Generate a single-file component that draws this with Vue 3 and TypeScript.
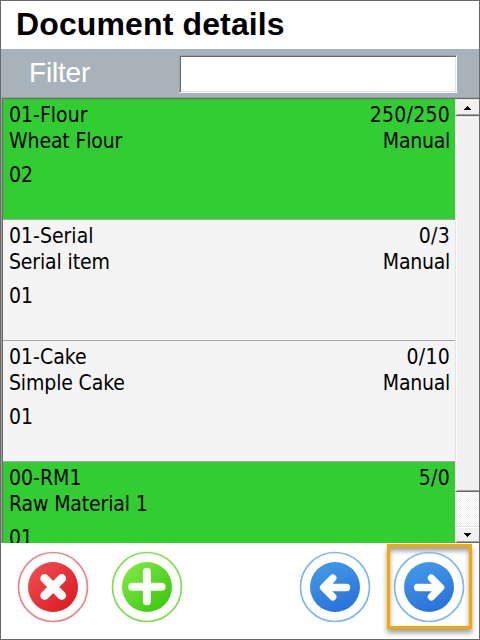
<script setup lang="ts">
import { ref } from 'vue'

interface DocumentLine {
  code: string
  name: string
  warehouse: string
  quantity: string
  mode: string
  done: boolean
}

const filter = ref('')

const lines: DocumentLine[] = [
  { code: '01-Flour', name: 'Wheat Flour', warehouse: '02', quantity: '250/250', mode: 'Manual', done: true },
  { code: '01-Serial', name: 'Serial item', warehouse: '01', quantity: '0/3', mode: 'Manual', done: false },
  { code: '01-Cake', name: 'Simple Cake', warehouse: '01', quantity: '0/10', mode: 'Manual', done: false },
  { code: '00-RM1', name: 'Raw Material 1', warehouse: '01', quantity: '5/0', mode: '', done: true },
]
</script>

<template>
  <main class="window">
    <h1 class="title">Document details</h1>
    <div class="filter-bar">
      <label class="filter-label" for="filter">Filter</label>
      <input id="filter" v-model="filter" class="filter-input" type="text" />
    </div>

    <section class="list">
      <div class="rows">
        <article v-for="line in lines" :key="line.code" class="row" :class="{ done: line.done }">
          <div class="pair"><span class="code">{{ line.code }}</span><span class="quantity">{{ line.quantity }}</span></div>
          <div class="pair"><span>{{ line.name }}</span><span class="mode">{{ line.mode }}</span></div>
          <div class="pair warehouse"><span>{{ line.warehouse }}</span></div>
        </article>
      </div>
      <div class="scrollbar">
        <div class="raised arrow">
          <svg width="7" height="4" viewBox="0 0 7 4" shape-rendering="crispEdges"><path d="M3 0h1v1h1v1h1v1h1v1H0V3h1V2h1V1h1z" /></svg>
        </div>
        <div class="raised thumb"></div>
        <div class="track"></div>
        <div class="raised arrow">
          <svg width="7" height="4" viewBox="0 0 7 4" shape-rendering="crispEdges"><path d="M0 0h7v1H6v1H5v1H4v1H3V3H2V2H1V1H0z" /></svg>
        </div>
      </div>
    </section>

    <footer class="actions">
      <svg class="defs" width="0" height="0">
        <defs>
          <linearGradient id="red" x1="0" y1="0" x2="1" y2="1"><stop offset=".1" stop-color="#f04a4e" /><stop offset=".9" stop-color="#dc1c24" /></linearGradient>
          <linearGradient id="green" x1="0" y1="0" x2="1" y2="1"><stop offset=".1" stop-color="#7de83f" /><stop offset=".9" stop-color="#3cc811" /></linearGradient>
          <linearGradient id="blue" x1=".3" y1="0" x2=".7" y2="1"><stop offset="0" stop-color="#4299e8" /><stop offset="1" stop-color="#2871d9" /></linearGradient>
        </defs>
      </svg>
      <button class="action" aria-label="Cancel">
        <svg width="72" height="72" viewBox="-36 -36 72 72">
          <circle r="34.5" fill="#fff" stroke="#ec8588" stroke-width="1.7" />
          <circle r="25" fill="url(#red)" />
          <path d="M-8.3-8.5 8.7 8.5M8.7-8.5-8.3 8.5" stroke="#fff" stroke-width="8.8" stroke-linecap="round" />
        </svg>
      </button>
      <button class="action add" aria-label="Add">
        <svg width="72" height="72" viewBox="-36 -36 72 72">
          <circle r="34.5" fill="#fff" stroke="#80dd50" stroke-width="1.7" />
          <circle r="25" fill="url(#green)" />
          <path d="M-.1-15.2V14.2M-14.8-.3H14.6" stroke="#fff" stroke-width="8" stroke-linecap="round" />
        </svg>
      </button>
      <button class="action back" aria-label="Back">
        <svg width="72" height="72" viewBox="-36 -36 72 72">
          <circle r="34.5" fill="#fff" stroke="#80b7ec" stroke-width="1.7" />
          <circle r="25" fill="url(#blue)" />
          <path d="M-10.6.5H11.6M-2.2-8.8-11.5.5-2.2 9.8" fill="none" stroke="#fff" stroke-width="7.3" stroke-linecap="round" stroke-linejoin="round" />
        </svg>
      </button>
      <button class="action next" aria-label="Next">
        <svg width="72" height="72" viewBox="-36 -36 72 72">
          <circle r="34.5" fill="none" stroke="#80b7ec" stroke-width="1.7" />
          <circle r="25" fill="url(#blue)" />
          <path d="M10.6.5H-11.4M2.4-8.8 11.7.5 2.4 9.8" fill="none" stroke="#fff" stroke-width="7.3" stroke-linecap="round" stroke-linejoin="round" />
        </svg>
      </button>
    </footer>
  </main>
</template>

<style>
body {
  margin: 0;
  overflow: hidden;
}
</style>

<style scoped>
.window {
  box-sizing: border-box;
  width: 480px;
  height: 640px;
  border: 1px solid #696969;
  background: #fff;
  display: flex;
  flex-direction: column;
  overflow: hidden;
  font-family: "Liberation Sans", Arial, sans-serif;
}
.title {
  margin: 0;
  height: 48px;
  padding-left: 15px;
  box-sizing: border-box;
  font-size: 32px;
  line-height: 47px;
  letter-spacing: 0.13px;
  font-weight: 700;
  color: #000;
  flex: none;
  white-space: nowrap;
}
.filter-bar {
  flex: none;
  height: 48px;
  box-sizing: border-box;
  padding: 6px 22px 4px 28px;
  display: flex;
  justify-content: space-between;
  background: #a8b2ba;
}
.filter-label {
  font-size: 28px;
  line-height: 35px;
  letter-spacing: -0.2px;
  color: #fff;
}
.filter-input {
  box-sizing: border-box;
  width: 278px;
  height: 38px;
  margin: 0;
  padding: 0 6px;
  border: 1px solid;
  border-color: #a0a0a0 #fff #fff #a0a0a0;
  border-radius: 0;
  box-shadow: inset 1px 1px #696969, inset -1px -1px #e3e3e3;
  background: #fff;
  font: 24px "Liberation Sans", Arial, sans-serif;
  outline: none;
}
.list {
  flex: none;
  height: 446px;
  box-sizing: border-box;
  display: flex;
  padding: 2px 0 0 2px;
  box-shadow: inset 1px 1px #a0a0a0, inset 2px 2px #696969;
}
.rows {
  width: 452px;
  height: 444px;
  overflow: hidden;
  font-family: "DejaVu Sans Condensed", "DejaVu Sans", sans-serif;
  font-stretch: condensed;
  font-size: 21px;
  line-height: 26px;
  letter-spacing: -0.13px;
  color: #000;
}
.row {
  height: 121px;
  box-sizing: border-box;
  padding: 3px 5px 0 6px;
  background: #f4f4f4;
  border-bottom: 1px solid #a6a6a6;
}
.row.done {
  background: #32cd32;
}
.pair {
  display: flex;
  justify-content: space-between;
  height: 26px;
  white-space: nowrap;
}
.code {
  letter-spacing: 0.02px;
}
.quantity {
  letter-spacing: 0.25px;
}
.mode {
  letter-spacing: -0.25px;
}
.warehouse {
  margin-top: 8px;
}
.scrollbar {
  width: 24px;
  display: flex;
  flex-direction: column;
}
.raised {
  box-sizing: border-box;
  background: #f0f0f0;
  border: 1px solid;
  border-color: #e3e3e3 #696969 #696969 #e3e3e3;
  border-right: 0;
  box-shadow: inset 1px 1px #fff, inset 0 -1px #a0a0a0;
}
.arrow {
  height: 17px;
  display: flex;
  align-items: center;
  justify-content: center;
}
.thumb {
  height: 376px;
}
.track {
  flex: 1;
  background: repeating-conic-gradient(#f0f0f0 0 25%, #fff 0 50%) 0 0 / 2px 2px;
}
.actions {
  flex: 1;
  display: flex;
  align-items: flex-start;
  padding: 1px 0 0 16px;
}
.defs {
  width: 0;
  height: 0;
}
.action {
  box-sizing: border-box;
  width: 72px;
  height: 72px;
  margin: 7px 0 0;
  padding: 0;
  border: 0;
  background: none;
  flex: none;
}
.action svg {
  display: block;
}
.add {
  margin-left: 22px;
}
.back {
  margin-left: 116px;
}
.next {
  width: 85px;
  height: 85px;
  margin: 0 0 0 16px;
  padding: 4px 4px 3px 3px;
  border: 3px solid #f2a900;
  box-shadow: 0 4px 5px rgba(0, 0, 0, 0.38), inset 0 4px 5px rgba(0, 0, 0, 0.38);
}
</style>
